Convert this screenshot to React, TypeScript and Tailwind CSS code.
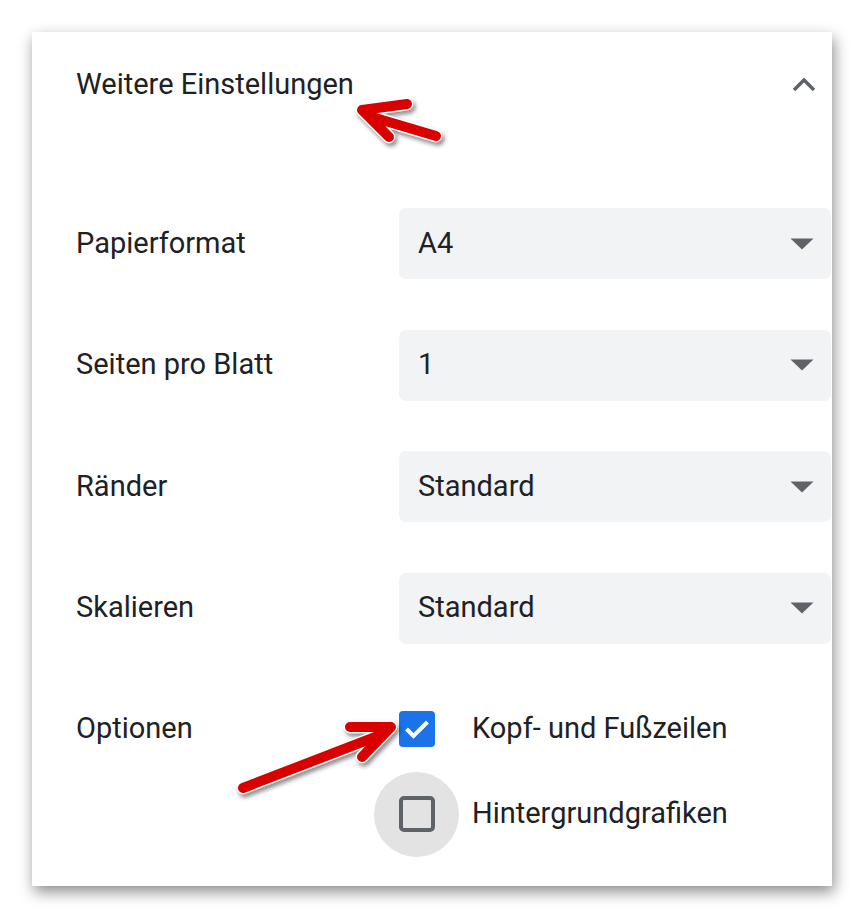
import React from "react";

const font = { fontFamily: "Roboto, 'Liberation Sans', sans-serif" };

const rows = [
  { label: "Papierformat", value: "A4" },
  { label: "Seiten pro Blatt", value: "1" },
  { label: "Ränder", value: "Standard" },
  { label: "Skalieren", value: "Standard" },
];

function Caret() {
  return (
    <svg width="24" height="12" viewBox="0 0 24 12">
      <path d="M0.5 0.5 L23.5 0.5 L12 11.5 Z" fill="#5f6368" />
    </svg>
  );
}

function SelectRow({ label, value }: { label: string; value: string }) {
  return (
    <div className="flex h-[71px] items-center">
      <div className="w-[323px] text-[29px] text-[#202124]">{label}</div>
      <div className="flex h-[71px] w-[432px] items-center justify-between rounded-[7px] bg-[#f1f3f4] pl-[19px] pr-[17px]">
        <span className="text-[29px] text-[#202124]">{value}</span>
        <Caret />
      </div>
    </div>
  );
}

function Arrows() {
  const a1 = "M407 104 L362 110 L389 137 M372 117 L436 136";
  const a2 = "M350 727 L391 727 L362 757 M383 734 L243 788";
  return (
    <svg
      className="pointer-events-none absolute left-0 top-0"
      width="864"
      height="918"
      viewBox="0 0 864 918"
      style={{ filter: "drop-shadow(2px 3px 2px rgba(0,0,0,0.45))" }}
    >
      {[a1, a2].map((d) => (
        <g key={d}>
          <path d={d} fill="none" stroke="#ffffff" strokeWidth="13" strokeLinecap="round" strokeLinejoin="round" />
          <path d={d} fill="none" stroke="#d90000" strokeWidth="10" strokeLinecap="round" strokeLinejoin="round" />
        </g>
      ))}
    </svg>
  );
}

export default function App() {
  return (
    <div className="relative h-[918px] w-[864px] overflow-hidden bg-white" style={font}>
      <div className="pl-[32px] pt-[32px]">
        <div className="h-[854px] w-[800px] bg-white pl-[44px] shadow-[2px_6px_14px_rgba(0,0,0,0.45)]">
          {/* header */}
          <div className="flex h-[106px] items-center justify-between pr-[16px]">
            <span className="text-[29px] text-[#202124]">Weitere Einstellungen</span>
            <svg width="24" height="14" viewBox="0 0 24 14">
              <path d="M2 12 L12 2 L22 12" fill="none" stroke="#5f6368" strokeWidth="3.5" />
            </svg>
          </div>

          {/* selects */}
          <div className="mt-[70px] flex flex-col gap-[50.5px]">
            {rows.map((r) => (
              <SelectRow key={r.label} label={r.label} value={r.value} />
            ))}
          </div>

          {/* options */}
          <div className="mt-[43px] flex">
            <div className="flex h-[85px] w-[298px] items-center text-[29px] text-[#202124]">Optionen</div>
            <div className="flex flex-col">
              <div className="flex h-[85px] items-center">
                <div className="flex h-[85px] w-[85px] items-center justify-center">
                  <div className="flex h-[36px] w-[36px] items-center justify-center rounded-[4px] bg-[#1a73e8]">
                    <svg width="36" height="36" viewBox="0 0 36 36">
                      <path d="M7.5 18 L14.5 25 L28.5 11" fill="none" stroke="#ffffff" strokeWidth="4" />
                    </svg>
                  </div>
                </div>
                <span className="ml-[13px] text-[29px] text-[#202124]">Kopf- und Fußzeilen</span>
              </div>
              <div className="flex h-[85px] items-center">
                <div className="flex h-[85px] w-[85px] items-center justify-center rounded-full bg-[#e3e3e3]">
                  <div className="h-[36px] w-[36px] rounded-[5px] border-[4px] border-[#5f6368]" />
                </div>
                <span className="ml-[13px] text-[29px] text-[#202124]">Hintergrundgrafiken</span>
              </div>
            </div>
          </div>
        </div>
      </div>
      <Arrows />
    </div>
  );
}
